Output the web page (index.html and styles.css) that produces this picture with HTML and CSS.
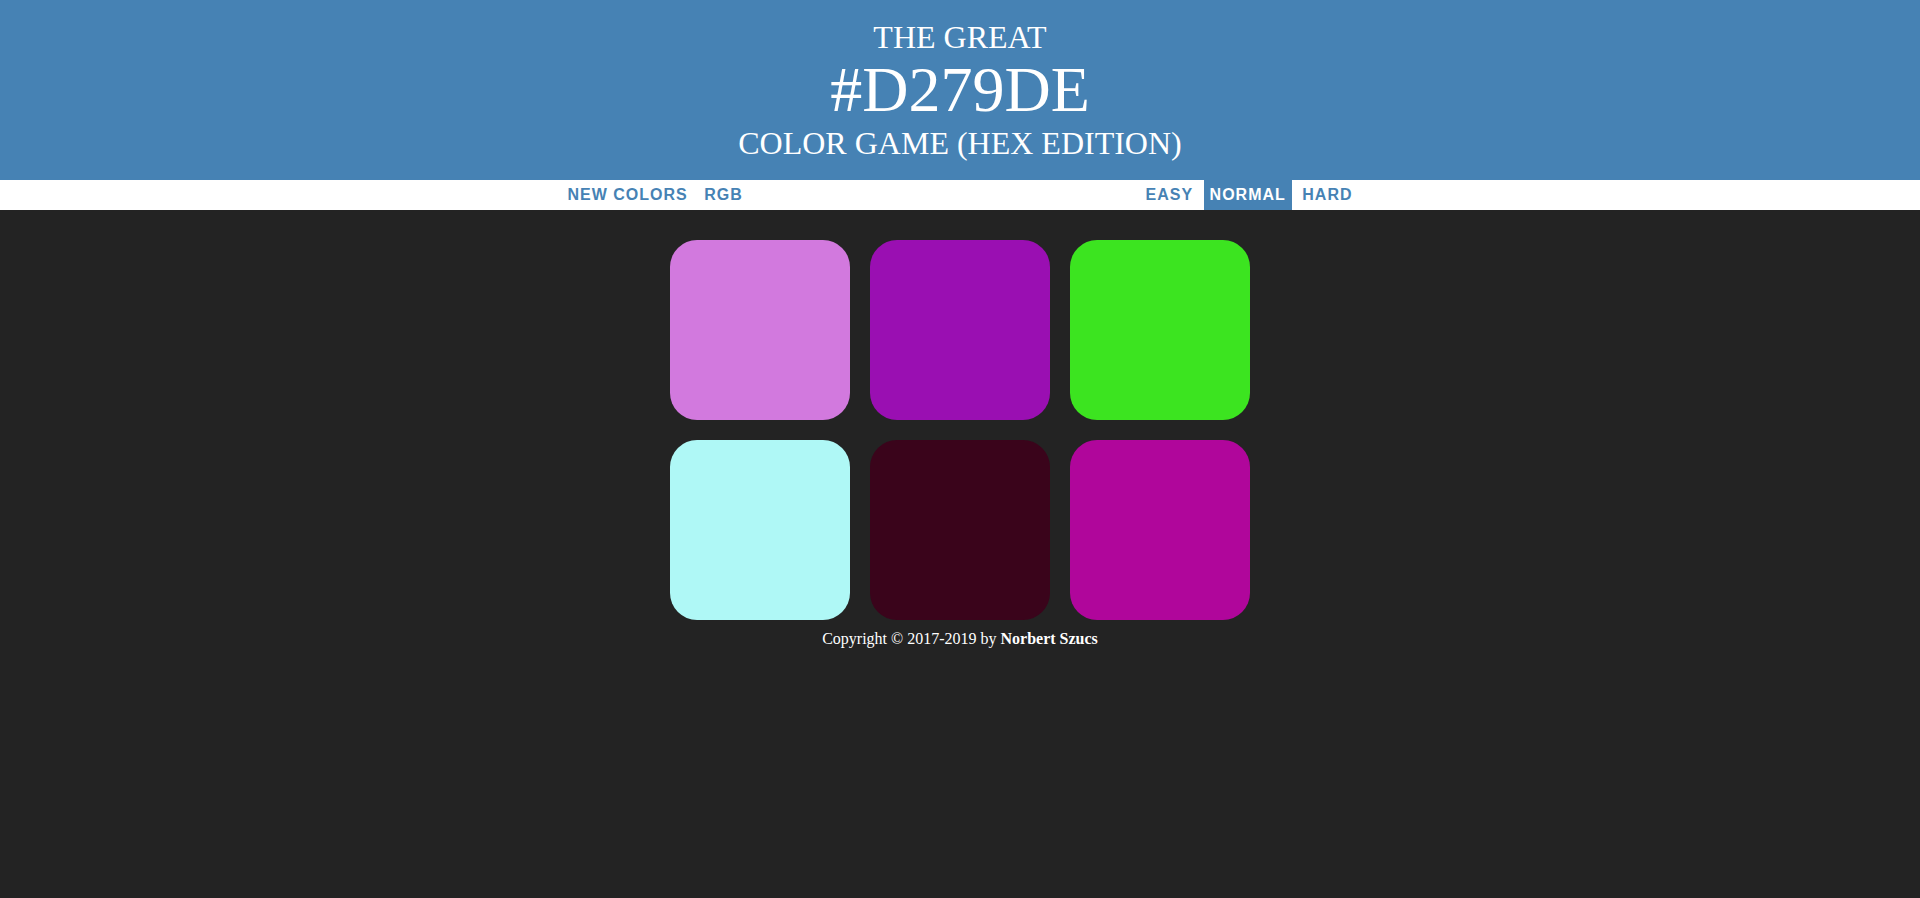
FILE: index.html
```html
<!DOCTYPE html>
<html lang="en">
<head>
<meta charset="utf-8">
<title>The Great Color Game (Hex Edition)</title>
<link rel="stylesheet" href="styles.css">
</head>
<body>
<h1 class="title">The Great<br><span class="color-display">#D279DE</span><br>Color Game (Hex Edition)</h1>
<div class="stripe">
  <div class="stripe-inner">
    <div class="group">
      <button class="btn">New Colors</button>
      <button class="btn">RGB</button>
    </div>
    <div class="group">
      <button class="btn">Easy</button>
      <button class="btn selected">Normal</button>
      <button class="btn">Hard</button>
    </div>
  </div>
</div>
<div class="container">
  <div class="square" style="background:#d279de"></div>
  <div class="square" style="background:#9a0fb2"></div>
  <div class="square" style="background:#3ce420"></div>
  <div class="square" style="background:#aff8f6"></div>
  <div class="square" style="background:#3a041b"></div>
  <div class="square" style="background:#b0069b"></div>
  <p class="footer">Copyright &copy; 2017-2019 by <strong>Norbert Szucs</strong></p>
</div>
</body>
</html>
```
FILE: styles.css
```css
html, body {
  margin: 0;
  padding: 0;
}
body {
  background: #232323;
  font-family: "Liberation Serif", "Times New Roman", serif;
  font-size: 16px;
}
.title {
  margin: 0;
  padding: 20px 0 19.2px;
  background: #4682b4;
  color: #ffffff;
  text-align: center;
  text-transform: uppercase;
  font-weight: normal;
  font-size: 32px;
  line-height: 1.1;
}
.color-display {
  font-size: 200%;
}
.stripe {
  background: #ffffff;
  height: 30px;
}
.stripe-inner {
  width: 797px;
  height: 100%;
  margin: 0 auto;
  display: flex;
  justify-content: space-between;
  font-family: "Liberation Sans", Arial, sans-serif;
  font-size: 16px;
}
.group {
  height: 100%;
  white-space: nowrap;
}
.btn {
  height: 100%;
  border: none;
  margin: 0;
  padding: 1px 6px;
  background: none;
  color: #4682b4;
  font-family: "Liberation Sans", Arial, sans-serif;
  font-size: 16px;
  font-weight: 700;
  letter-spacing: 1px;
  text-transform: uppercase;
  outline: none;
  cursor: pointer;
  vertical-align: top;
}
.btn.selected {
  background: #4682b4;
  color: #ffffff;
}
.container {
  max-width: 600px;
  margin: 20px auto;
}
.square {
  width: 30%;
  padding-bottom: 30%;
  float: left;
  margin: 1.66%;
  border-radius: 15%;
}
.footer {
  clear: both;
  margin: 0;
  color: #ffffff;
  text-align: center;
  font-size: 16px;
}
```
